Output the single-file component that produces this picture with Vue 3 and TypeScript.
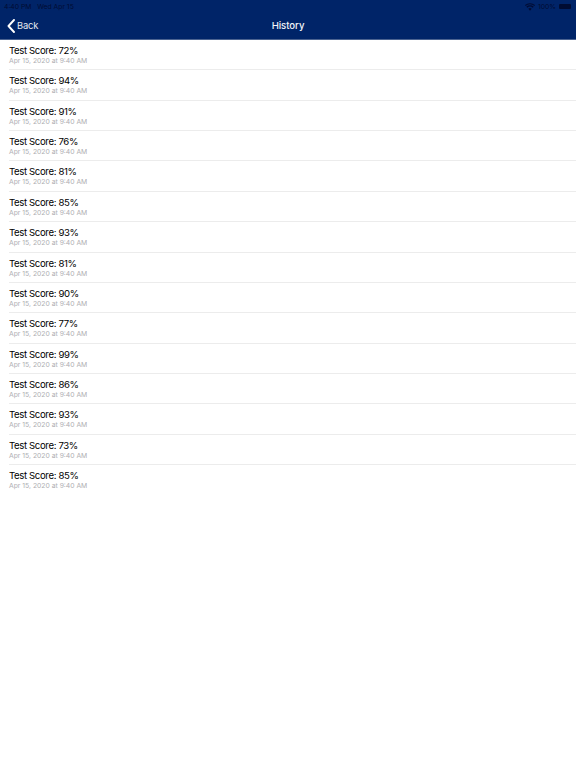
<script setup lang="ts">
const scores: number[] = [72, 94, 91, 76, 81, 85, 93, 81, 90, 77, 99, 86, 93, 73, 85];
</script>

<template>
  <div class="page">
    <header class="top">
      <div class="status">
        <span class="status-left">4:40 PM&nbsp;&nbsp;&nbsp;Wed Apr 15</span>
        <span class="status-right">
          <svg class="wifi" width="10" height="8" viewBox="0 0 20 15">
            <path d="M10 15 L6.6 11.2 A5 5 0 0 1 13.4 11.2 Z M4.6 9 L2.5 6.8 A11 11 0 0 1 17.5 6.8 L15.4 9 A8 8 0 0 0 4.6 9 Z M1.2 5.3 L0 3.6 A15 15 0 0 1 20 3.6 L18.8 5.3 A13 13 0 0 0 1.2 5.3 Z" fill="#000c33" />
          </svg>
          <span>100%</span>
          <span class="battery"></span>
        </span>
      </div>
      <nav class="nav">
        <div class="back">
          <svg width="8" height="14" viewBox="0 0 8 14">
            <path d="M7 1 L1.5 7 L7 13" fill="none" stroke="#fff" stroke-width="1.9" stroke-linecap="round" stroke-linejoin="round" />
          </svg>
          <span>Back</span>
        </div>
        <div class="title">History</div>
      </nav>
    </header>
    <ul class="list">
      <li v-for="(score, i) in scores" :key="i" class="row">
        <div class="score">Test Score: {{ score }}%</div>
        <div class="date">Apr 15, 2020 at 9:40 AM</div>
      </li>
    </ul>
  </div>
</template>

<style>
html, body { margin: 0; background: #fff; }
</style>

<style scoped>
.page {
  width: 576px;
  height: 768px;
  overflow: hidden;
  font-family: "Inter", "Liberation Sans", sans-serif;
  background: #fff;
}
.top {
  height: 40px;
  box-sizing: border-box;
  background: #002468;
  border-bottom: 1px solid #4a6290;
  display: flex;
  flex-direction: column;
}
.status {
  height: 11px;
  padding: 1px 5px 0 4px;
  display: flex;
  justify-content: space-between;
  align-items: center;
  font-size: 6.8px;
  color: #000c33;
}
.status-right {
  display: flex;
  align-items: center;
  gap: 3px;
}
.battery {
  width: 12px;
  height: 5px;
  background: #000c33;
  border-radius: 1px;
  display: block;
}
.nav {
  flex: 1;
  position: relative;
  display: flex;
  align-items: center;
  justify-content: center;
}
.back {
  position: absolute;
  left: 7px;
  top: 50%;
  transform: translateY(-50%);
  display: flex;
  align-items: center;
  gap: 2px;
  color: #e4e8f0;
  font-size: 9.4px;
  letter-spacing: -0.2px;
}
.title {
  color: #f2f4f8;
  font-size: 9.6px;
  font-weight: 500;
  letter-spacing: -0.05px;
}
.list {
  list-style: none;
  margin: 0;
  padding: 0 0 0 9px;
}
.row {
  height: 30.36px;
  box-sizing: border-box;
  padding-top: 5px;
  border-bottom: 1px solid #ececec;
}
.row:last-child { border-bottom: none; }
.score {
  font-size: 9.6px;
  line-height: 12px;
  letter-spacing: -0.37px;
  color: #000;
}
.date {
  font-size: 6.8px;
  line-height: 8px;
  color: #aeaeb2;
}
</style>
